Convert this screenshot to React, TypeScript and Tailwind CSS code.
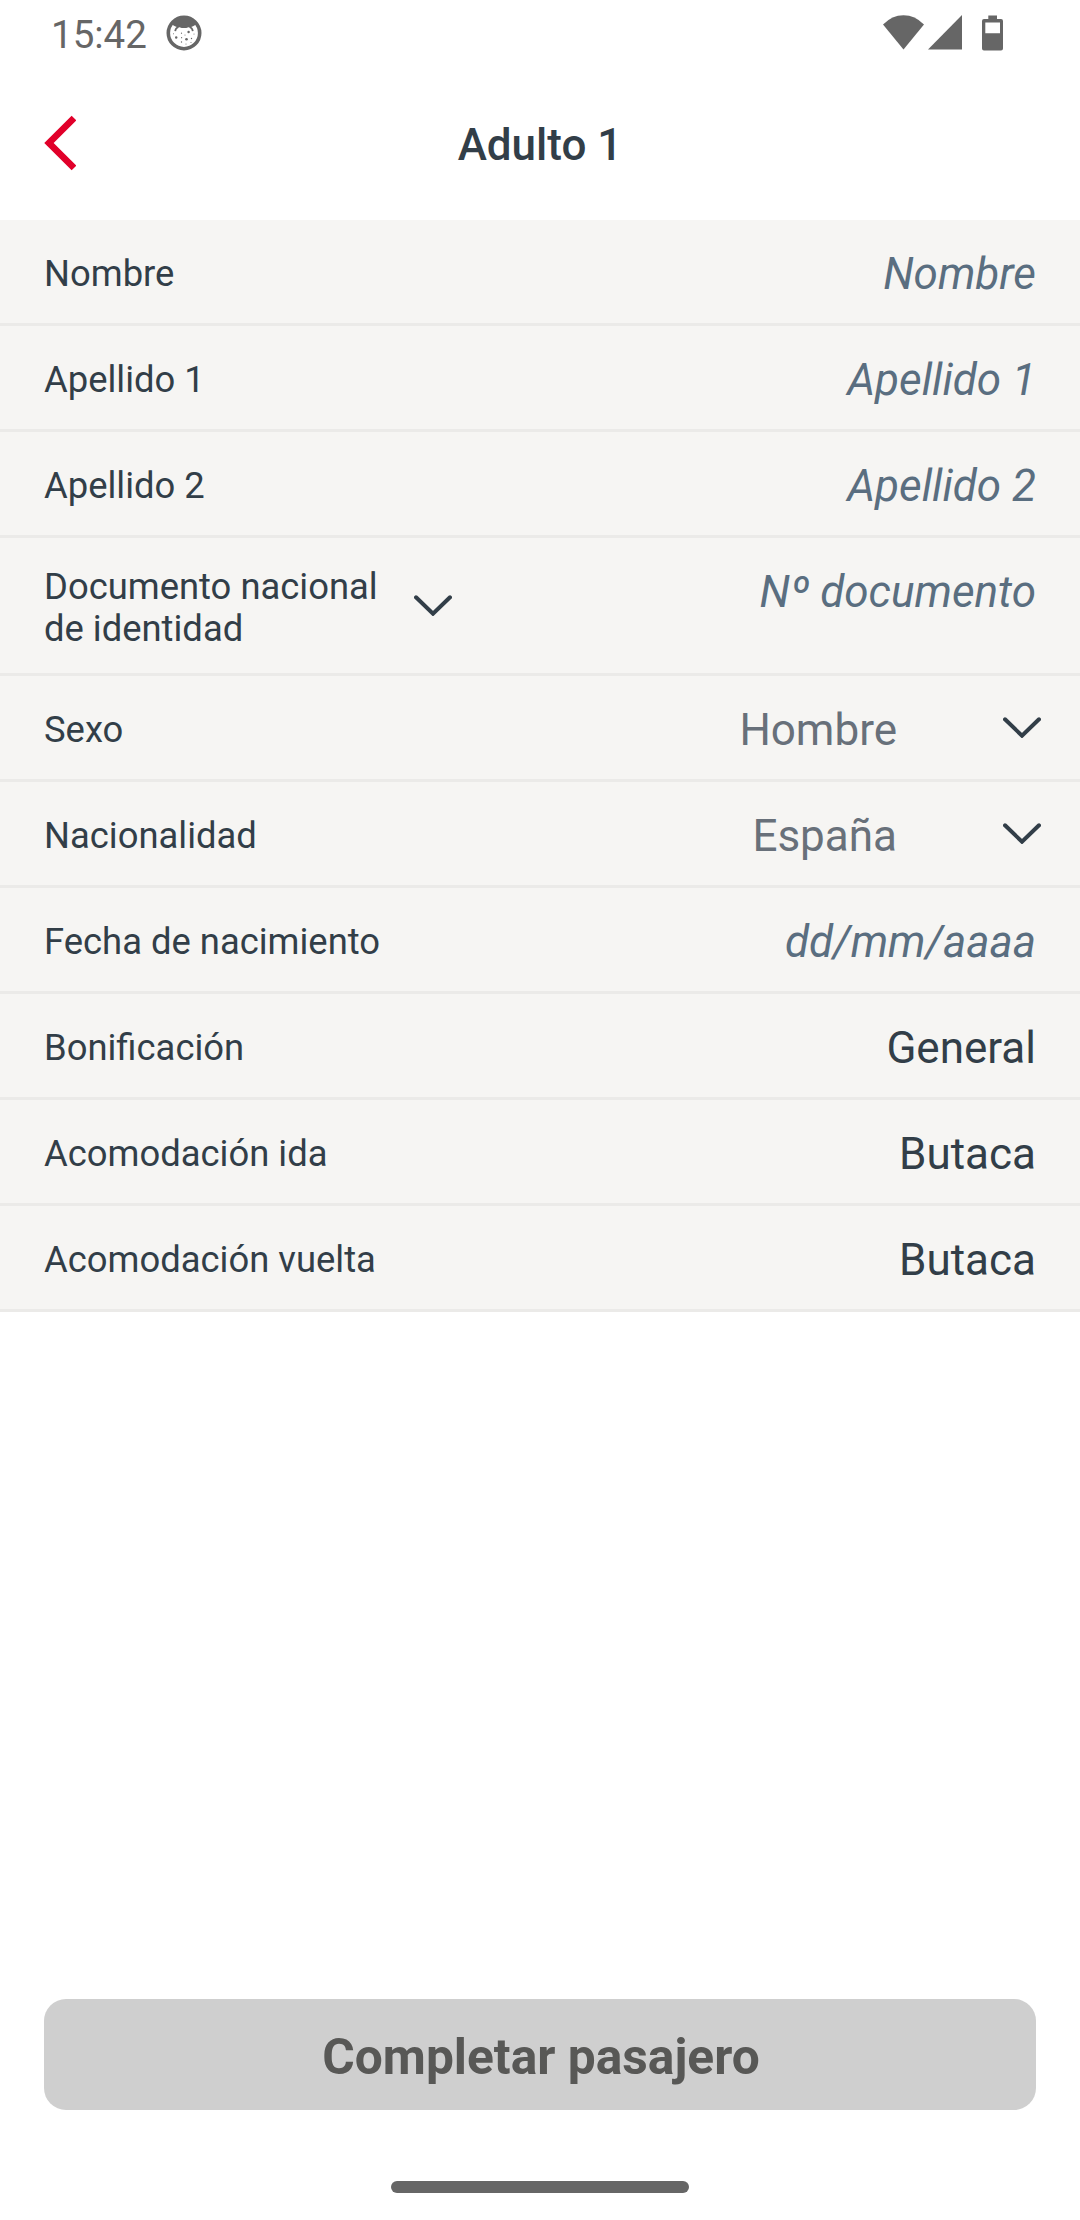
import clsx from "clsx";

type Field = {
    label: string;
    value: string;
    kind: "input" | "select" | "static";
};

const nameFields: Field[] = [
    { label: "Nombre", value: "Nombre", kind: "input" },
    { label: "Apellido 1", value: "Apellido 1", kind: "input" },
    { label: "Apellido 2", value: "Apellido 2", kind: "input" },
];

const detailFields: Field[] = [
    { label: "Sexo", value: "Hombre", kind: "select" },
    { label: "Nacionalidad", value: "España", kind: "select" },
    { label: "Fecha de nacimiento", value: "dd/mm/aaaa", kind: "input" },
    { label: "Bonificación", value: "General", kind: "static" },
    { label: "Acomodación ida", value: "Butaca", kind: "static" },
    { label: "Acomodación vuelta", value: "Butaca", kind: "static" },
];

function ChevronDown({ className }: { className?: string }) {
    return (
        <svg viewBox="0 0 38 21" fill="none" className={clsx("h-[21px] w-[38px] shrink-0", className)}>
            <path d="M2 2.3 19 18.7 36 2.3" stroke="#323e48" strokeWidth="4" strokeLinecap="round" />
        </svg>
    );
}

function StatusBar() {
    return (
        <div className="flex h-[68px] items-start justify-between pl-[51px] pr-[77px] text-[#666]">
            <div className="flex">
                <span className="mt-[11px] w-[115px] text-[38.5px] leading-[48px]">15:42</span>
                <svg viewBox="0 0 36 36" className="mt-[15px] size-[36px]">
                    <circle cx="18" cy="18" r="15.7" fill="#fff" stroke="#666" strokeWidth="3.6" />
                    <path d="M5.500 8.500Q10 2 18 2T30.500 8.500Q27 12.500 22.500 12.200Q18 14 13.500 12.200Q9 12.500 5.500 8.500Z" fill="#666" />
                    <path d="M9.200 16.200Q9.500 13 12.500 12M26.800 16.200Q26.500 13 23.500 12" fill="none" stroke="#666" strokeWidth="1.700" />
                    <g fill="#666">
                        <circle cx="10.200" cy="22.500" r="1.200" />
                        <circle cx="20.500" cy="24.200" r="1.300" />
                        <circle cx="22.600" cy="17" r="1.200" />
                        <circle cx="15.500" cy="18.200" r=".6" />
                        <circle cx="15.600" cy="22.700" r=".6" />
                        <circle cx="25.500" cy="23.500" r=".7" />
                        <circle cx="15.500" cy="27" r=".7" />
                        <circle cx="20" cy="29" r=".5" />
                        <circle cx="7.500" cy="18.700" r=".5" />
                        <circle cx="28" cy="19" r=".5" />
                        <circle cx="25" cy="27.500" r=".5" />
                        <circle cx="19" cy="20" r=".5" />
                    </g>
                </svg>
            </div>
            <div className="mt-[15px] flex">
                <svg viewBox="0 0 41 35" className="h-[35px] w-[41px]" fill="currentColor">
                    <path d="M0 9.500Q9 .2 20.500 .2T41 9.500L20.500 34.500Z" />
                </svg>
                <svg viewBox="0 0 34 35" className="ml-[4px] h-[35px] w-[34px]" fill="currentColor">
                    <path d="M34 0V34.500H0Z" />
                </svg>
                <svg viewBox="0 0 21 36" className="ml-[20px] h-[36px] w-[21px]" fill="currentColor">
                    <path fillRule="evenodd" d="M6.300 .5H15V4H19Q21 4 21 6V33.500Q21 35.500 19 35.500H2Q0 35.500 0 33.500V6Q0 4 2 4H6.300ZM3.300 7.500V18.300H18V7.500Z" />
                </svg>
            </div>
        </div>
    );
}

function Header() {
    return (
        <header className="grid h-[152px] grid-cols-[1fr_auto_1fr] items-start px-11">
            <button type="button" aria-label="Volver" className="mt-[47px] w-8">
                <svg viewBox="0 0 32 56" className="h-[56px] w-[32px]" fill="none">
                    <path d="M30 3 5 28 30 53" stroke="#e1002a" strokeWidth="6.700" />
                </svg>
            </button>
            <h1 className="mt-[51px] text-[44px] font-medium leading-[52px]">Adulto 1</h1>
        </header>
    );
}

function FieldRow({ field }: { field: Field }) {
    return (
        <div className="flex h-[106px] items-start justify-between border-b-3 border-[#ebeae8] px-11">
            <span className="mt-[33px] text-[36.4px] leading-[42px]">{field.label}</span>
            <div className="flex">
                <span
                    className={clsx(
                        "mt-[28px] text-[44px] leading-[52px]",
                        field.kind === "input" && "italic text-[#5a6e80]",
                        field.kind === "select" && "text-[#68707a]"
                    )}
                >
                    {field.value}
                </span>
                {field.kind === "select" && <ChevronDown className="-mr-[5px] ml-[106px] mt-[41px]" />}
            </div>
        </div>
    );
}

export default function App() {
    return (
        <div className="flex h-[2220px] w-[1080px] flex-col bg-white font-['Roboto',sans-serif] text-[#323e48]">
            <StatusBar />
            <Header />

            <main className="bg-[#f6f5f3]">
                {nameFields.map((field) => (
                    <FieldRow key={field.label} field={field} />
                ))}
                <div className="flex h-[138px] items-start border-b-3 border-[#ebeae8] px-11">
                    <span className="mt-[28px] w-[370px] text-[36.4px] leading-[42px]">
                        Documento nacional
                        <br />
                        de identidad
                    </span>
                    <ChevronDown className="mt-[57px]" />
                    <span className="ml-auto mt-[28px] text-[44px] italic leading-[52px] text-[#5a6e80]">Nº documento</span>
                </div>
                {detailFields.map((field) => (
                    <FieldRow key={field.label} field={field} />
                ))}
            </main>

            <footer className="mt-auto flex flex-col items-center px-11 pb-[27px]">
                <button
                    type="button"
                    disabled
                    className="h-[111px] w-full rounded-[22px] bg-[#cfcfcf] pl-[2px] pt-[4px] text-[49.7px] font-bold leading-[60px] text-[#585856]"
                >
                    Completar pasajero
                </button>
                <div className="mt-[71px] h-[12px] w-[298px] rounded-full bg-[#666]" />
            </footer>
        </div>
    );
}
